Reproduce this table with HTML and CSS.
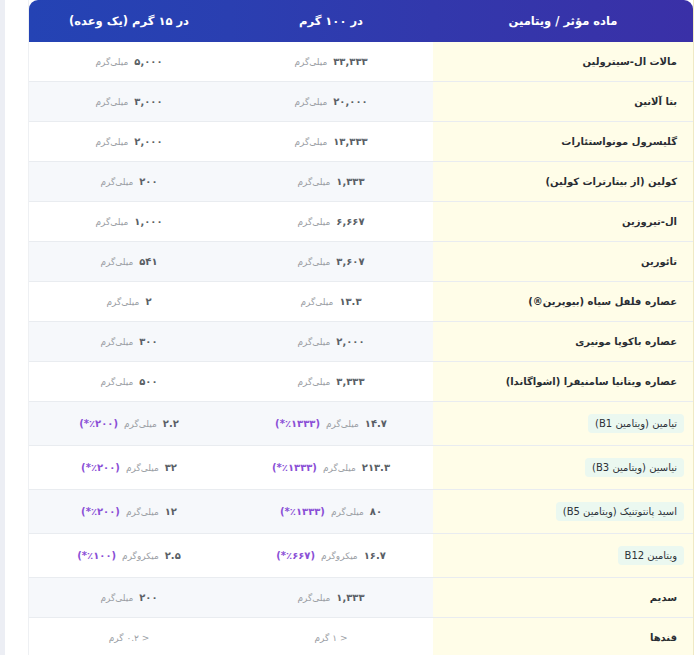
FILE: index.html
```html
<!DOCTYPE html>
<html lang="fa">
<head>
<meta charset="utf-8">
<title>جدول ترکیبات</title>
<link rel="stylesheet" href="styles.css">
</head>
<body>
<div class="page">
  <div class="rail"></div>
  <div class="wrap">
    <table class="facts" dir="rtl">
      <colgroup>
        <col class="c-name">
        <col class="c-100">
        <col class="c-15">
      </colgroup>
      <thead>
        <tr>
          <th>ماده مؤثر / ویتامین</th>
          <th>در ۱۰۰ گرم</th>
          <th>در ۱۵ گرم (یک وعده)</th>
        </tr>
      </thead>
      <tbody>
        <tr>
          <td class="name">مالات ال-سیترولین</td>
          <td><div class="val"><span class="num">۳۳,۳۳۳</span><span class="unit">میلی‌گرم</span></div></td>
          <td><div class="val"><span class="num">۵,۰۰۰</span><span class="unit">میلی‌گرم</span></div></td>
        </tr>
        <tr>
          <td class="name">بتا آلانین</td>
          <td><div class="val"><span class="num">۲۰,۰۰۰</span><span class="unit">میلی‌گرم</span></div></td>
          <td><div class="val"><span class="num">۳,۰۰۰</span><span class="unit">میلی‌گرم</span></div></td>
        </tr>
        <tr>
          <td class="name">گلیسرول مونواستئارات</td>
          <td><div class="val"><span class="num">۱۳,۳۳۳</span><span class="unit">میلی‌گرم</span></div></td>
          <td><div class="val"><span class="num">۲,۰۰۰</span><span class="unit">میلی‌گرم</span></div></td>
        </tr>
        <tr>
          <td class="name">کولین (از بیتارترات کولین)</td>
          <td><div class="val"><span class="num">۱,۳۳۳</span><span class="unit">میلی‌گرم</span></div></td>
          <td><div class="val"><span class="num">۲۰۰</span><span class="unit">میلی‌گرم</span></div></td>
        </tr>
        <tr>
          <td class="name">ال-تیروزین</td>
          <td><div class="val"><span class="num">۶,۶۶۷</span><span class="unit">میلی‌گرم</span></div></td>
          <td><div class="val"><span class="num">۱,۰۰۰</span><span class="unit">میلی‌گرم</span></div></td>
        </tr>
        <tr>
          <td class="name">تائورین</td>
          <td><div class="val"><span class="num">۳,۶۰۷</span><span class="unit">میلی‌گرم</span></div></td>
          <td><div class="val"><span class="num">۵۴۱</span><span class="unit">میلی‌گرم</span></div></td>
        </tr>
        <tr>
          <td class="name">عصاره فلفل سیاه (بیوپرین®)</td>
          <td><div class="val"><span class="num">۱۳.۳</span><span class="unit">میلی‌گرم</span></div></td>
          <td><div class="val"><span class="num">۲</span><span class="unit">میلی‌گرم</span></div></td>
        </tr>
        <tr>
          <td class="name">عصاره باکوپا مونیری</td>
          <td><div class="val"><span class="num">۲,۰۰۰</span><span class="unit">میلی‌گرم</span></div></td>
          <td><div class="val"><span class="num">۳۰۰</span><span class="unit">میلی‌گرم</span></div></td>
        </tr>
        <tr>
          <td class="name">عصاره ویتانیا سامنیفرا (اشواگاندا)</td>
          <td><div class="val"><span class="num">۳,۳۳۳</span><span class="unit">میلی‌گرم</span></div></td>
          <td><div class="val"><span class="num">۵۰۰</span><span class="unit">میلی‌گرم</span></div></td>
        </tr>
        <tr class="vit">
          <td class="name"><span class="pill">تیامین (ویتامین B1)</span></td>
          <td><div class="val"><span class="num">۱۴.۷</span><span class="unit">میلی‌گرم</span><span class="pct">(٪۱۳۳۳*)</span></div></td>
          <td><div class="val"><span class="num">۲.۲</span><span class="unit">میلی‌گرم</span><span class="pct">(٪۲۰۰*)</span></div></td>
        </tr>
        <tr class="vit">
          <td class="name"><span class="pill">نیاسین (ویتامین B3)</span></td>
          <td><div class="val"><span class="num">۲۱۳.۳</span><span class="unit">میلی‌گرم</span><span class="pct">(٪۱۳۳۳*)</span></div></td>
          <td><div class="val"><span class="num">۳۲</span><span class="unit">میلی‌گرم</span><span class="pct">(٪۲۰۰*)</span></div></td>
        </tr>
        <tr class="vit">
          <td class="name"><span class="pill">اسید پانتوتنیک (ویتامین B5)</span></td>
          <td><div class="val"><span class="num">۸۰</span><span class="unit">میلی‌گرم</span><span class="pct">(٪۱۳۳۳*)</span></div></td>
          <td><div class="val"><span class="num">۱۲</span><span class="unit">میلی‌گرم</span><span class="pct">(٪۲۰۰*)</span></div></td>
        </tr>
        <tr class="vit">
          <td class="name"><span class="pill">ویتامین B12</span></td>
          <td><div class="val"><span class="num">۱۶.۷</span><span class="unit">میکروگرم</span><span class="pct">(٪۶۶۷*)</span></div></td>
          <td><div class="val"><span class="num">۲.۵</span><span class="unit">میکروگرم</span><span class="pct">(٪۱۰۰*)</span></div></td>
        </tr>
        <tr>
          <td class="name">سدیم</td>
          <td><div class="val"><span class="num">۱,۳۳۳</span><span class="unit">میلی‌گرم</span></div></td>
          <td><div class="val"><span class="num">۲۰۰</span><span class="unit">میلی‌گرم</span></div></td>
        </tr>
        <tr>
          <td class="name">قندها</td>
          <td><div class="val"><span class="unit">&lt; ۱ گرم</span></div></td>
          <td><div class="val"><span class="unit">&lt; ۰.۲ گرم</span></div></td>
        </tr>
      </tbody>
    </table>
  </div>
</div>
</body>
</html>
```
FILE: styles.css
```css
html, body {
  margin: 0;
  padding: 0;
  background: #ffffff;
}

body {
  font-family: "DejaVu Sans", "Noto Sans", sans-serif;
  color: #2b2f36;
}

.page {
  display: flex;
  min-height: 655px;
}

.rail {
  width: 5px;
  flex: 0 0 5px;
  background: #eceef4;
}

.wrap {
  padding-left: 23px;
  padding-right: 8px;
  flex: 1;
}

.facts {
  width: 664px;
  border-collapse: separate;
  border-spacing: 0;
  table-layout: fixed;
  border-right: 1px solid #efe9c4;
  border-left: 1px solid #eef0f3;
}

.c-name { width: 260px; }
.c-100 { width: 204px; }
.c-15 { width: 200px; }

.facts thead th {
  height: 42px;
  padding: 0 10px;
  font-size: 11.5px;
  font-weight: bold;
  color: #ffffff;
  text-align: center;
}

.facts thead th:nth-child(1) {
  background: linear-gradient(to left, #3a30a7, #3238ac);
  border-top-right-radius: 9px;
}

.facts thead th:nth-child(2) {
  background: linear-gradient(to left, #3238ac, #2a3fb1);
}

.facts thead th:nth-child(3) {
  background: linear-gradient(to left, #2a3fb1, #2443b4);
  border-top-left-radius: 9px;
}

.facts tbody td {
  height: 39px;
  padding: 0 16px;
  border-bottom: 1px solid #e9ecf0;
  background: #ffffff;
  vertical-align: middle;
}

.facts tbody tr:nth-child(even) td {
  background: #f6f8fb;
}

.facts tbody td.name,
.facts tbody tr:nth-child(even) td.name {
  background: #fffde8;
  text-align: right;
  font-size: 10px;
  font-weight: bold;
  color: #2a2d33;
}

.facts tbody tr.vit td {
  height: 43px;
}

.facts tbody tr.vit td.name {
  padding-right: 9px;
}

.pill {
  display: inline-block;
  background: #ebf8f0;
  border-radius: 4px;
  padding: 4px 7px;
  font-weight: normal;
  font-size: 10px;
  color: #2d3238;
}

.val {
  display: flex;
  flex-direction: row;
  justify-content: center;
  align-items: baseline;
  gap: 6px;
  direction: rtl;
}

.num {
  font-size: 10px;
  font-weight: bold;
  color: #5a5f66;
}

.unit {
  font-size: 9px;
  color: #9a9ea4;
}

.pct {
  font-size: 10px;
  font-weight: bold;
  color: #8a4fd6;
}
```
